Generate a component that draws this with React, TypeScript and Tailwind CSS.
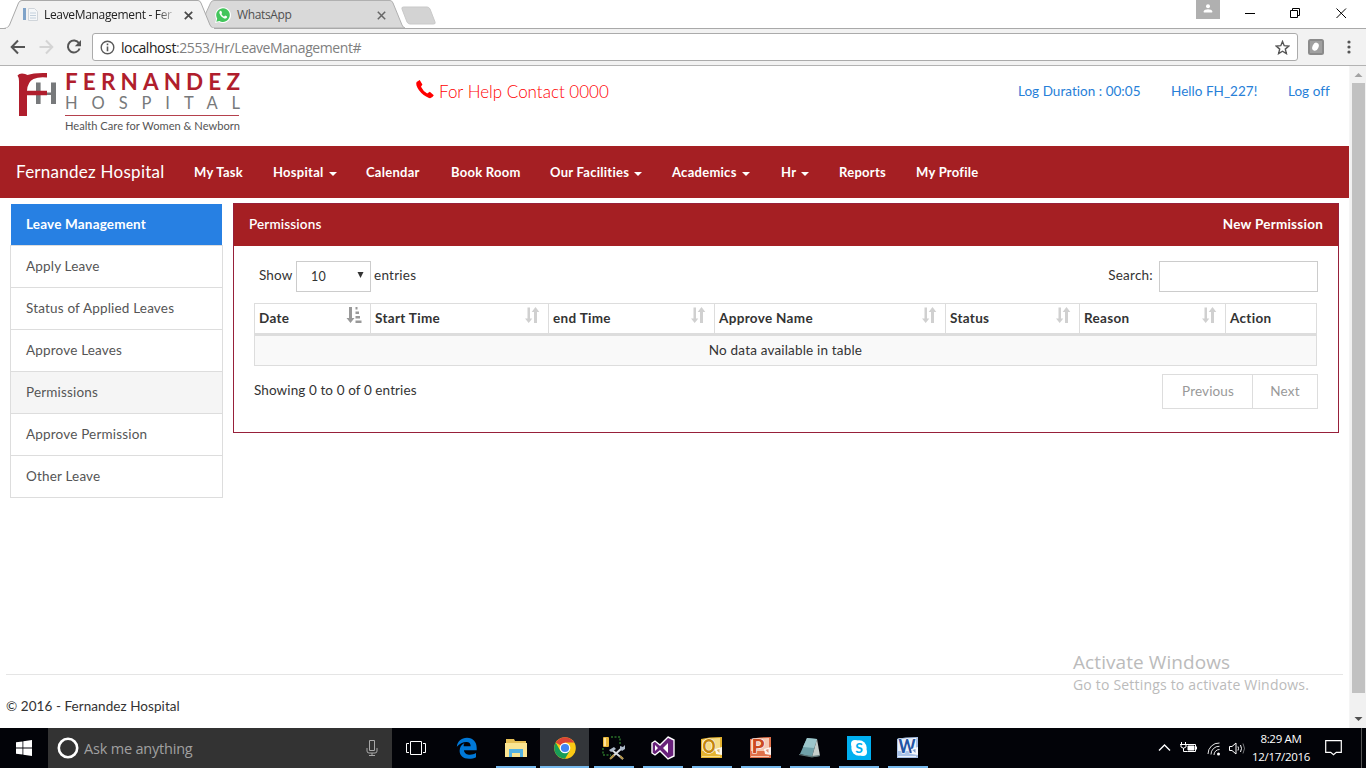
import React from "react";

const page = "font-['Lato','Liberation_Sans',sans-serif]";
const sys = "font-['Open_Sans','Noto_Sans',sans-serif]";

function ChromeTabs() {
  return (
    <div className={`flex h-[28px] w-full bg-white ${sys}`}>
      <div className="relative z-10 ml-[4px] h-[28px] w-[201px] shrink-0">
        <svg className="absolute left-0 top-0" width="212" height="29" viewBox="0 0 212 29">
          <path d="M0 29 V28.5 Q4 28.5 5.5 25 L14.5 3 Q15.5 .5 18 .5 H194 Q196 .5 197 3 L206 25 Q207.500 28.500 211 28.500 V29Z" fill="#f2f2f2" stroke="#a9a9a9" />
          <path d="M2 28.500H210" stroke="#f2f2f2" strokeWidth="1.500" />
        </svg>
        <div className="relative flex h-[28px] items-center pl-[18px] pt-[2px]">
          <svg width="17" height="16" viewBox="0 0 17 16">
            <rect x="1" y="1" width="3" height="12" fill="#7fa3c9" />
            <path d="M6.500 1.500h6l3 3v9h-9z" fill="#f5f7f9" stroke="#d0d5da" />
            <path d="M8 6h6M8 8.500h6M8 11h6" stroke="#c3d0dc" />
          </svg>
          <span className="ml-[5px] w-[133px] overflow-hidden whitespace-nowrap text-[12px] tracking-[-0.33px] text-[#222] [mask-image:linear-gradient(to_right,black_85%,transparent)]">LeaveManagement - Fer</span>
          <svg className="ml-[7px] shrink-0" width="9" height="9" viewBox="0 0 9 9"><path d="M.8.8l7.400 7.400M8.200.8L.8 8.200" stroke="#4a4a4a" strokeWidth="1.700" /></svg>
        </div>
      </div>
      <div className="relative h-[28px] w-[195px] shrink-0">
        <svg className="absolute left-0 top-0" width="200" height="28" viewBox="0 0 200 28">
          <path d="M0 28 L.5 14 L5.500 3 Q6.500 .5 9 .5 H185 Q187 .5 188 3 L197 25 Q198 27.500 200 28Z" fill="#d9d9d9" stroke="#b0b0b0" />
        </svg>
        <div className="relative flex h-[28px] items-center pl-[10px] pt-[2px]">
          <svg width="16" height="16" viewBox="0 0 16 16">
            <path d="M0 16l1.200-4A7.900 7.900 0 1 1 4 14.900z" fill="#fff" />
            <path d="M1.300 14.700l.9-3A6.800 6.800 0 1 1 4.400 13.900z" fill="#43c55c" />
            <path d="M5.300 3.800c-.9.500-1.200 1.600-.8 2.700.8 2.200 2.600 4 4.700 4.900 1.300.5 2.400 0 2.900-1.100v-.8l-2-1-.9 1c-1.300-.5-2.300-1.500-2.800-2.600l.7-.9-.8-2z" fill="#fff" />
          </svg>
          <span className="ml-[6px] w-[140px] text-[12px] tracking-[-0.35px] text-[#505050]">WhatsApp</span>
          <svg width="9" height="9" viewBox="0 0 9 9"><path d="M.8.8l7.400 7.400M8.200.8L.8 8.200" stroke="#666" strokeWidth="1.500" /></svg>
        </div>
      </div>
      <svg className="mt-[6px] shrink-0" width="38" height="20" viewBox="0 0 38 20"><path d="M3.500 1H27q2 0 3 2l5 13q.8 2-1.500 2H10q-2 0-3-2L2 3q-.7-2 1.500-2z" fill="#d3d3d3" stroke="#c9c9c9" /></svg>
      <div className="ml-auto flex h-full items-start">
        <div className="flex h-[19px] w-[24px] justify-center bg-[#b0b0b0] pt-[4px]">
          <svg width="10" height="10" viewBox="0 0 10 10" fill="#fff"><circle cx="5" cy="2.300" r="2" /><path d="M.8 8.500V7.200Q1.500 5.300 5 5.300t4.200 1.900v1.300z" /></svg>
        </div>
        <svg className="ml-[24px]" width="122" height="26" viewBox="0 0 122 26" fill="none" stroke="#000">
          <path d="M1 13.500h10M46.500 10.500h7v7h-7zM48.500 10.500v-2h7v7h-2M92.500 8.500l9.500 9.500M102 8.500l-9.500 9.500" />
        </svg>
      </div>
    </div>
  );
}

function Toolbar() {
  return (
    <div className="flex h-[38px] w-full items-center border-b border-t border-b-[#b3b3b3] border-t-[#a9a9a9] bg-[#f2f2f2]">
      <svg className="shrink-0" width="92" height="36" viewBox="0 0 92 36" fill="none" strokeWidth="2">
        <path d="M25 18H12M18 11.500L11.700 18l6.300 6.500" stroke="#555" />
        <path d="M39.500 18H52M46 11.500l6.300 6.500-6.300 6.500" stroke="#d4d4d4" />
        <path d="M79 14.300a6 6 0 1 0 .6 5.200" stroke="#555" />
        <path d="M81 11v6.200h-6.200z" fill="#555" />
      </svg>
      <div className="flex h-[28px] w-[1206px] items-center rounded-[3px] border border-[#ababab] bg-white pl-[7px] pr-[7px]">
        <svg width="15" height="15" viewBox="0 0 15 15" fill="none" stroke="#5a5a5a"><circle cx="7.500" cy="7.500" r="6.300" strokeWidth="1.400" /><path d="M7.500 6.500v4.800M7.500 3.500v1.700" strokeWidth="1.600" /></svg>
        <span className={`ml-[6px] text-[14px] tracking-[-0.41px] text-[#808080] ${sys}`}><span className="text-[#222]">localhost</span>:2553/Hr/LeaveManagement#</span>
        <svg className="ml-auto" width="15" height="15" viewBox="0 0 15 15"><path d="M7.500 1.500l1.700 4.200 4.600.4-3.500 3 1.100 4.500-3.900-2.400-3.900 2.400 1.100-4.500-3.500-3 4.600-.4z" fill="none" stroke="#555" strokeWidth="1.400" /></svg>
      </div>
      <svg className="ml-[10px]" width="16" height="16" viewBox="0 0 16 16"><rect width="16" height="16" rx="2.500" fill="#8b8b8b" /><path d="M2 2h12v12H2z" fill="#a0a0a0" /><ellipse cx="7.500" cy="7.700" rx="3" ry="4.200" transform="rotate(25 7.500 7.700)" fill="#fff" /></svg>
      <svg className="ml-[23px]" width="4" height="16" viewBox="0 0 4 16" fill="#555"><circle cx="2" cy="3" r="1.600" /><circle cx="2" cy="8" r="1.600" /><circle cx="2" cy="13" r="1.600" /></svg>
    </div>
  );
}

function Logo() {
  return (
    <svg width="230" height="68" viewBox="0 -4 230 68" className="font-['Lato',sans-serif]">
      <path d="M21 11.500h4.600V33H21zM36 11.500h5V33h-5zM25 21.500h11v2.500H25z" fill="#77797b" />
      <path d="M2.500 4.500Q4 2.500 7 2.500q3.500 0 5.500 1.500Q19 1.500 32 2v4.500q-8-1-13.500 1.500Q12.500 11 12 19.700h20v4.500H12V45H4V10Q4 6.500 2.500 4.500z" fill="#b01e2d" />
      <text x="50" y="18.500" fontSize="22.500" fontWeight="700" fill="#b01e2d" textLength="175" lengthAdjust="spacing">FERNANDEZ</text>
      <text x="50" y="38" fontSize="16.500" fill="#77797b" textLength="175" lengthAdjust="spacing">HOSPITAL</text>
      <path d="M50 44.500h174" stroke="#b5414d" />
      <text x="50" y="58.500" fontSize="10.500" fill="#555" textLength="175" lengthAdjust="spacingAndGlyphs">Health Care for Women &amp; Newborn</text>
    </svg>
  );
}

function Caret() {
  return <span className="ml-[5px] mt-[3px] inline-block border-x-4 border-t-4 border-x-transparent border-t-white" />;
}

const nav: [string, string, boolean][] = [
  ["My Task", "w-[79px]", false],
  ["Hospital", "w-[93px]", true],
  ["Calendar", "w-[85px]", false],
  ["Book Room", "w-[99px]", false],
  ["Our Facilities", "w-[122px]", true],
  ["Academics", "w-[109px]", true],
  ["Hr", "w-[58px]", true],
  ["Reports", "w-[77px]", false],
  ["My Profile", "w-[80px]", false],
];

const side = ["Apply Leave", "Status of Applied Leaves", "Approve Leaves", "Permissions", "Approve Permission", "Other Leave"];

const cols: [string, string][] = [
  ["Date", "w-[116px]"],
  ["Start Time", "w-[178px]"],
  ["end Time", "w-[166px]"],
  ["Approve Name", "w-[231px]"],
  ["Status", "w-[134px]"],
  ["Reason", "w-[146px]"],
  ["Action", "w-[91px]"],
];

function SortIcon({ active }: { active: boolean }) {
  return active ? (
    <svg width="16" height="17" viewBox="0 0 16 17" fill="#999"><path d="M3 0h3v11h2.500L4.500 16 .5 11H3zM9.500 0h2v2.500h-2zM9.500 4.500h3.500V7H9.500zM9.500 9H14v2.500H9.500zM9.500 13.500h6V16h-6z" /></svg>
  ) : (
    <svg width="16" height="17" viewBox="0 0 16 17" fill="#d0d0d0"><path d="M3.500.5h2.500v11H8.300L4.700 16 1 11.500h2.500zM10 16V5H7.700l3.800-5 3.800 5H13v11z" /></svg>
  );
}

function Permissions() {
  return (
    <section className="mt-[5px] h-[230px] w-[1106px] border border-[#97203a] bg-white tracking-[0.14px]">
      <div className="flex h-[42px] items-center justify-between bg-[#a51f23] px-[15px] pb-[2px] text-[13.5px] font-bold text-white">
        <span className="font-semibold">Permissions</span>
        <span className="tracking-[0.24px]">New Permission</span>
      </div>
      <div className="flex flex-col px-[20px] pt-[15px]">
        <div className="flex h-[31px] items-center pl-[5px]">
          <span className="w-[37px] pb-[3px]">Show</span>
          <span className="flex h-[31px] w-[75px] items-center justify-between border border-[#ccc] pl-[14px] pr-[6px] text-[12.5px]">
            10
            <svg className="mb-[3px]" width="7" height="6" viewBox="0 0 7 6"><path d="M.5 0h6L3.500 6z" fill="#333" /></svg>
          </span>
          <span className="ml-[3px] pb-[3px] tracking-[0.25px]">entries</span>
          <span className="ml-auto pb-[3px] tracking-[0.25px]">Search:</span>
          <input aria-label="Search" className="ml-[6px] h-[31px] w-[159px] border border-[#ccc] bg-white" />
        </div>
        <div className="mt-[11px] flex h-[32px] w-[1063px] border-b-[2px] border-l border-t border-[#ddd]">
          {cols.map(([name, w], i) => (
            <div key={name} className={`flex shrink-0 items-start justify-between border-r border-[#ddd] pl-[4px] pr-[8px] ${w}`}>
              <span className="mt-[4px] font-bold tracking-[0.32px]">{name}</span>
              {i < 6 && <span className="mt-[3px]"><SortIcon active={i === 0} /></span>}
            </div>
          ))}
        </div>
        <div className="flex h-[31px] w-[1063px] items-center justify-center border border-[#ddd] bg-[#f9f9f9] pb-[1px] tracking-[0.18px]">No data available in table</div>
        <div className="mt-[8px] flex items-start justify-between">
          <span className="mt-[6px] tracking-[0.1px]">Showing 0 to 0 of 0 entries</span>
          <div className="flex h-[35px] w-[156px] border border-[#ddd] text-[#999]">
            <span className="flex w-[90px] items-center justify-center border-r border-[#ddd] pb-[1px] pl-[1px]">Previous</span>
            <span className="flex flex-1 items-center justify-center pb-[1px]">Next</span>
          </div>
        </div>
      </div>
    </section>
  );
}

function Scrollbar() {
  return (
    <div className="flex w-[17px] shrink-0 flex-col items-center border-l border-[#f5f5f5] bg-[#f1f1f1]">
      <svg width="17" height="17" viewBox="0 0 17 17"><path d="M4.500 11h8l-4-4z" fill="#a3a3a3" /></svg>
      <div className="h-[610px] w-[13px] bg-[#c1c1c1]" />
      <svg className="mt-auto" width="17" height="17" viewBox="0 0 17 17"><path d="M4.500 6h8l-4 4z" fill="#505050" /></svg>
    </div>
  );
}

const office = (bg: string, tint: string, dark: string, letter: string) => (
  <svg width="24" height="24" viewBox="0 0 24 24">
    <path d="M1 3Q8 1 22 1v21H1z" fill={bg} />
    <path d="M2 4Q9 2 20 2v13H2z" fill={tint} />
    <path d="M2 20.500h18" stroke={tint} />
    <text x="2.500" y="17" fontSize="18" fontWeight="900" fill={dark} stroke="#fff" strokeWidth="1.200" paintOrder="stroke" fontFamily="Lato" textLength={letter === "W" ? 17 : 13} lengthAdjust="spacingAndGlyphs">{letter}</text>
    <path d="M15 13l7-2v8l-6-1z" fill="#fff" opacity=".9" />
    <path d="M16.500 14l3-1v4z" fill={dark} opacity=".6" />
  </svg>
);

const apps: React.ReactNode[] = [
  <svg width="22" height="22" viewBox="0 0 22 22"><path d="M.8 9.700C1.500 4.300 5.300.8 11 .8c6.200 0 9.700 4.300 9.700 10.200v2.200H8c.2 3.300 3 4.500 6 4.500 2.300 0 4.200-.6 6-1.700v4.300c-2 1-4.300 1.500-7 1.500-6 0-9.400-3.400-9.400-8 0-3.600 2-6.400 5-7.800C7.600 7 7.700 8 7.700 9.300h7c0-3-1.500-4.400-4.200-4.400-3.700 0-7 1.900-9.700 4.800z" fill="#0078d7" /></svg>,
  <svg width="22" height="20" viewBox="0 0 22 20"><path d="M1 1h8l1 2h11v15H1z" fill="#e6bf55" /><path d="M0 5h22v14H0z" fill="#fbe592" /><path d="M4 11h14v8h-3v-4H7v4H4z" fill="#55b3e2" /></svg>,
  <svg width="22" height="22" viewBox="0 0 22 22"><circle cx="11" cy="11" r="10.800" fill="#fbc914" /><path d="M11 11L1.650 5.600A10.800 10.800 0 0 1 20.350 5.600H11z" fill="#dc4437" /><path d="M1.650 5.600A10.800 10.800 0 0 0 11 21.800l4.700-8.100H6.300z" fill="#189d58" /><circle cx="11" cy="11" r="5.300" fill="#fff" /><circle cx="11" cy="11" r="4.100" fill="#4285f4" /></svg>,
  <svg width="24" height="24" viewBox="0 0 24 24"><rect x="1" y="1" width="6" height="10" rx="1" fill="#e9b83a" /><path d="M2 2h2v8H2z" fill="#ffe49a" /><path d="M9 1h9v8M1 12v7h8" stroke="#3faa38" fill="none" strokeDasharray="2 1.500" /><path d="M9 22L20 12M10 14l11 9" stroke="#d7dce2" strokeWidth="2" /><path d="M7 14l5-3 2 2-5 3zM18 13v-3l3 1 2-2v4l-3 2z" fill="#aebaca" /><path d="M8 23l4-4M18 20l3 3" stroke="#b49448" strokeWidth="2" /></svg>,
  <svg width="24" height="24" viewBox="0 0 24 24"><path d="M17 1l6 3v16l-6 3-8-8-5 4-3-2V7l3-2 5 4z" fill="#68217a" stroke="#fff" strokeWidth="1.400" /><path d="M17 7v10l-5-5zM4 9v6l3-3z" fill="#fff" /></svg>,
  office("#e5b430", "#f6dc86", "#c4860c", "O"),
  office("#e0714a", "#f6c9b3", "#cc4b20", "P"),
  <svg width="24" height="24" viewBox="0 0 24 24"><path d="M9 2l10 1-5 18-12-3z" fill="#6fa0a8" /><path d="M9 2l10 1-3 9-11-1z" fill="#9cc6cb" /><path d="M19 3l3 17-8 1z" fill="#c5cecb" /><path d="M1 18l13 2 8-1v1l-8 1.500L1 19z" fill="#5b7374" /></svg>,
  <svg width="24" height="24" viewBox="0 0 24 24"><path d="M0 0h24v24H0z" fill="#00aff0" /><circle cx="12" cy="12" r="7.700" fill="#fff" /><circle cx="8" cy="8" r="4" fill="#fff" /><circle cx="16" cy="16" r="4" fill="#fff" /><text x="12" y="17" textAnchor="middle" fontSize="14" fontWeight="bold" fontFamily="Lato" fill="#00aff0">S</text></svg>,
  office("#a9c1e6", "#e9f0fa", "#2455a5", "W"),
];

function Taskbar() {
  return (
    <div className={`flex h-[40px] w-full bg-[#020308] ${sys}`}>
      <div className="flex w-[48px] items-center justify-center">
        <svg width="16" height="16" viewBox="0 0 16 16" fill="#fff"><path d="M0 2.300l6.500-.9v6.200H0zM7.300 1.300L16 0v7.600H7.300zM0 8.400h6.500v6.200L0 13.700zM7.300 8.400H16V16l-8.700-1.300z" /></svg>
      </div>
      <div className="flex w-[344px] items-center bg-[#333] pl-[9px] pr-[14px]">
        <svg width="22" height="22" viewBox="0 0 22 22"><circle cx="11" cy="11" r="9.200" fill="none" stroke="#fff" strokeWidth="2.600" /></svg>
        <span className="ml-[5px] pt-[2px] text-[14.500px] tracking-[-0.2px] text-[#a0a0a0]">Ask me anything</span>
        <svg className="ml-auto" width="12" height="18" viewBox="0 0 12 18" fill="none" stroke="#a8a8a8"><path d="M3.500 1.500h5v10h-5zM1 9v3q0 2 2 2h6q2 0 2-2V9M6 14v2.500M3 16.500h6" /></svg>
      </div>
      <div className="flex w-[50px] items-center pl-[14px]">
        <svg width="20" height="16" viewBox="0 0 20 16" fill="none" stroke="#fff"><path d="M4.500 1.500h11v13h-11zM3 3.500H.5v9H3M17 3.500h2.500v9H17" /></svg>
      </div>
      {apps.map((icon, i) => (
        <div key={i} className={`flex h-[40px] w-[49px] shrink-0 flex-col items-center ${i === 2 ? "bg-[#33363a]" : ""}`}>
          <div className="flex h-[38px] items-center pt-[2px]">{icon}</div>
          {i > 0 && <div className={`h-[2px] bg-[#76b9ed] ${i === 2 ? "w-[49px]" : "w-[40px]"}`} />}
        </div>
      ))}
      <div className="ml-auto flex items-center text-white">
        <svg width="92" height="24" viewBox="0 0 92 24" fill="none" stroke="#fff">
          <path d="M2 14.500l5.500-5.500L13 14.500" strokeWidth="1.400" />
          <path d="M29.500 8.500h9v7h-8" /><path d="M31 10h6v4h-6z" fill="#fff" /><path d="M39.500 10.500v3M24.500 6v2.500M28.500 6v2.500M23 8.500h7M24 9v2q2.500 2.500 5 0V9M26.500 12v3.500h4" />
          <path d="M51 18A11 11 0 0 1 62.500 7M54 18.500A8 8 0 0 1 62.500 10.300M57 19A5.500 5.500 0 0 1 62.500 13.500" opacity=".9" /><circle cx="61.500" cy="18" r="1.500" fill="#fff" stroke="none" />
          <path d="M72.500 10.500h2.500l4-3.500v11l-4-3.500h-2.500zM81 10.500q1 2 0 4M83.500 9q2 3.500 0 7" /><path d="M86 7.500q3 5 0 10" opacity=".45" />
        </svg>
        <div className="w-[64px] whitespace-nowrap text-center text-[11.500px] leading-[18px] tracking-[-0.3px]"><div>8:29 AM</div><div>12/17/2016</div></div>
        <svg className="ml-[12px] mr-[19px]" width="17" height="18" viewBox="0 0 17 18"><path d="M.7 1.700h15.600v11.600h-5l-2.800 2.500-2.800-2.500h-5z" fill="none" stroke="#fff" strokeWidth="1.200" /></svg>
        <div className="mr-[4px] h-[40px] w-px bg-[#555]" />
      </div>
    </div>
  );
}

export default function App() {
  return (
    <div className="flex h-[768px] w-[1366px] flex-col overflow-hidden bg-white">
      <ChromeTabs />
      <Toolbar />
      <div className="flex h-[662px]">
        <div className={`relative w-[1349px] text-[13.5px] leading-[20px] text-[#333] ${page}`}>
          <header className="flex h-[80px]">
            <div className="w-[415px] pl-[15px] pt-[1px]"><Logo /></div>
            <div className="flex h-[50px] items-center text-[17px] font-light text-[#f00]">
              <svg className="mb-[4px]" width="20" height="20" viewBox="0 0 20 20"><path d="M4.700 1L1.600 3.100Q.2 6 4 11.200T14 19q3 .8 4.800-2.700l-4-3.500-2.600 1.700Q8 12 6 7.700l1.400-2.300z" fill="#f00" /></svg>
              <span className="ml-[4px] pt-[2px]">For Help Contact 0000</span>
            </div>
            <div className="ml-auto flex h-[50px] items-center tracking-[0.03px] text-[#2780d8]">
              <span className="w-[153px]">Log Duration : 00:05</span><span className="w-[117px]">Hello FH_227!</span><span className="w-[61px]">Log off</span>
            </div>
          </header>
          <nav className="flex h-[52px] items-center bg-[#a51f23] pl-[16px] text-[13px] font-bold tracking-[0.27px] text-white">
            <span className="w-[178px] text-[17px] font-normal tracking-[0.26px]">Fernandez Hospital</span>
            {nav.map(([name, w, caret]) => (
              <span key={name} className={`flex shrink-0 items-center whitespace-nowrap ${w}`}>{name}{caret && <Caret />}</span>
            ))}
          </nav>
          <main className="flex h-[476px] items-start">
            <aside className="ml-[10px] mr-[10px] mt-[6px] w-[213px] tracking-[0.18px]">
              <div className="mx-px flex h-[41px] items-center bg-[#2780e3] pb-[2px] pl-[15px] font-bold text-white">Leave Management</div>
              <div className="border-t border-[#ddd]">
                {side.map((s) => (
                  <div key={s} className={`flex h-[42px] items-center border-x border-b border-[#ddd] pb-[2px] pl-[15px] text-[#555] ${s === "Permissions" ? "bg-[#f5f5f5]" : "bg-white"}`}>{s}</div>
                ))}
              </div>
            </aside>
            <Permissions />
          </main>
          <footer className="mx-[6px] border-t border-[#e5e5e5] pt-[21px] tracking-[0.06px]">© 2016 - Fernandez Hospital</footer>
          <div className={`absolute left-[1073px] top-[584px] text-[#bbb] ${sys}`}>
            <div className="text-[19px] leading-[24px] tracking-[0.08px]">Activate Windows</div>
            <div className="mt-[1px] whitespace-nowrap text-[14px] leading-[20px] tracking-[0.19px]">Go to Settings to activate Windows.</div>
          </div>
        </div>
        <Scrollbar />
      </div>
      <Taskbar />
    </div>
  );
}
